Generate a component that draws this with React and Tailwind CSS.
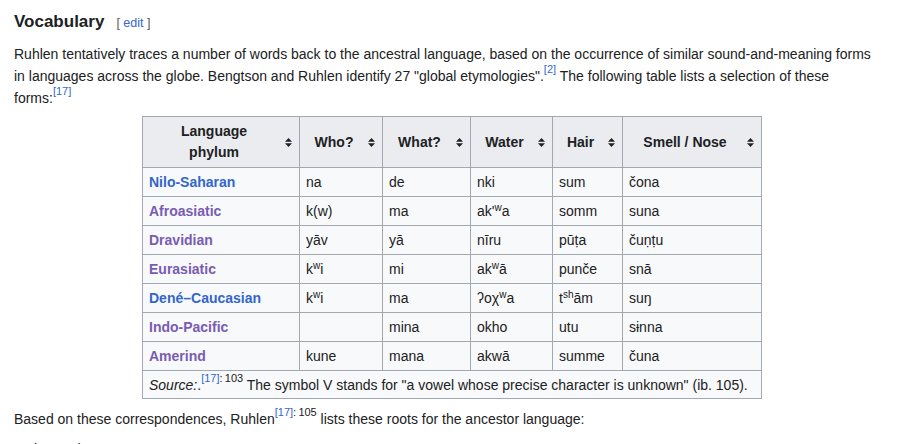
import React from 'react'

const SortIcon = () => (
  <svg width="7" height="9" viewBox="0 0 7 9" className="inline-block shrink-0">
    <path d="M3.5 0 L7 3.8 L0 3.8 Z" fill="#202122" />
    <path d="M3.5 9 L7 5.2 L0 5.2 Z" fill="#202122" />
  </svg>
)

const Ref = ({ n, page }) => (
  <sup className="text-[11px] leading-none relative -top-[2px] align-super">
    <span className="text-[#3366cc]">[{n}]</span>
    {page && <span className="text-[#202122]">:{'\u2009'}{page}</span>}
  </sup>
)

const Sw = ({ children }) => <sup className="text-[10px] leading-none">{children}</sup>

const headers = [
  { label: 'Language phylum', w: 'w-[157px]' },
  { label: 'Who?', w: 'w-[83px]' },
  { label: 'What?', w: 'w-[88px]' },
  { label: 'Water', w: 'w-[82px]' },
  { label: 'Hair', w: 'w-[70px]' },
  { label: 'Smell / Nose', w: 'w-[139px]' }
]

const rows = [
  { name: 'Nilo-Saharan', visited: false, cells: ['na', 'de', 'nki', 'sum', 'čona'] },
  { name: 'Afroasiatic', visited: true, cells: ['k(w)', 'ma', <>ak'<Sw>w</Sw>a</>, 'somm', 'suna'] },
  { name: 'Dravidian', visited: true, cells: ['yāv', 'yā', 'nīru', 'pūṭa', 'čuṇṭu'] },
  { name: 'Eurasiatic', visited: true, cells: [<>k<Sw>w</Sw>i</>, 'mi', <>ak<Sw>w</Sw>ā</>, 'punče', 'snā'] },
  { name: 'Dené–Caucasian', visited: false, cells: [<>k<Sw>w</Sw>i</>, 'ma', <>ʔoχ<Sw>w</Sw>a</>, <>t<Sw>sh</Sw>ām</>, 'suŋ'] },
  { name: 'Indo-Pacific', visited: true, cells: ['', 'mina', 'okho', 'utu', 'sɨnna'] },
  { name: 'Amerind', visited: true, cells: ['kune', 'mana', 'akwā', 'summe', 'čuna'] }
]

const App = () => {
  return (
    <div className="w-[900px] h-[444px] overflow-hidden bg-white text-[#202122] font-['Liberation_Sans',Arial,sans-serif] text-[14px] px-[14px] pt-[10px]">
      <div className="flex items-baseline">
        <h2 className="text-[17px] font-bold leading-[24px]">Vocabulary</h2>
        <span className="ml-[12px] text-[12.5px] text-[#54595d]">
          [ <span className="text-[#3366cc]">edit</span> ]
        </span>
      </div>

      <p className="mt-[9px] leading-[22px] w-[862px]">
        Ruhlen tentatively traces a number of words back to the ancestral language, based on the occurrence of similar sound-and-meaning forms in languages across the globe. Bengtson and Ruhlen identify 27 "global etymologies".
        <Ref n="2" /> The following table lists a selection of these
        <br />
        forms:
        <Ref n="17" />
      </p>

      <table className="mt-[7px] ml-[128px] border-collapse border border-[#a2a9b1] table-fixed">
        <thead>
          <tr className="h-[51px]">
            {headers.map((h) => (
              <th key={h.label} className={`${h.w} bg-[#eaecf0] border border-[#a2a9b1] font-bold leading-[21px] px-[6px] py-[4px]`}>
                <div className="flex items-center">
                  <span className={`flex-1 text-center ${h.label === 'Language phylum' ? 'px-[14px]' : ''}`}>{h.label}</span>
                  <span className="ml-[6px] mr-[1px]"><SortIcon /></span>
                </div>
              </th>
            ))}
          </tr>
        </thead>
        <tbody>
          {rows.map((r) => (
            <tr key={r.name} className="h-[29px]">
              <td className="bg-[#f8f9fa] border border-[#a2a9b1] px-[6px] leading-[20px] font-bold">
                <span className={r.visited ? 'text-[#795cb2]' : 'text-[#3366cc]'}>{r.name}</span>
              </td>
              {r.cells.map((c, i) => (
                <td key={i} className="bg-[#f8f9fa] border border-[#a2a9b1] px-[6px] leading-[20px]">{c}</td>
              ))}
            </tr>
          ))}
          <tr className="h-[28px]">
            <td colSpan={6} className="bg-[#f8f9fa] border border-[#a2a9b1] px-[6px] leading-[20px]">
              <i>Source:</i>.<Ref n="17" page="103" /> The symbol V stands for "a vowel whose precise character is unknown" (ib. 105).
            </td>
          </tr>
        </tbody>
      </table>

      <p className="mt-[9px] leading-[22px]">
        Based on these correspondences, Ruhlen<Ref n="17" page="105" /> lists these roots for the ancestor language:
      </p>

      <ul className="mt-[8px] ml-[20px] list-disc leading-[22px]">
        <li>ku = 'who'</li>
      </ul>
    </div>
  )
}

export default App
